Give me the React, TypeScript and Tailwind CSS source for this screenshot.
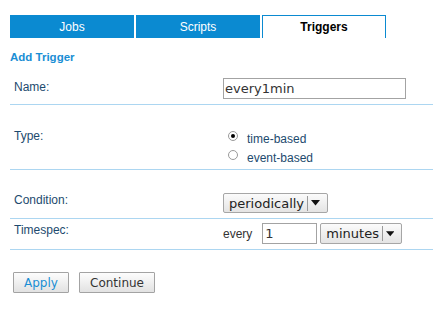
import React from 'react';

const label = "font-['Liberation_Sans',Arial,sans-serif] text-[12px] leading-[14px] text-[#1d4a6e]";
const ctrl = "font-['DejaVu_Sans',Verdana,sans-serif]";

const Select: React.FC<{ value: string; className?: string }> = ({ value, className }) => (
  <div
    className={`${ctrl} flex items-center h-full border border-[#a6a6a6] rounded-[2px] bg-gradient-to-b from-[#fbfbfb] to-[#e4e4e4] text-[13px] text-[#222] pl-[5px] pr-[7px] ${className ?? ''}`}
  >
    <span className="leading-none">{value}</span>
    <span className="ml-[3px] w-px h-[15px] bg-[#9a9a9a]" />
    <svg className="ml-[3px]" width="9" height="6" viewBox="0 0 9 6">
      <path d="M0 0h9L4.5 5.5z" fill="#111" />
    </svg>
  </div>
);

const Radio: React.FC<{ checked?: boolean; text: string }> = ({ checked, text }) => (
  <div className="flex items-start h-[19px]">
    <span className="mt-[1px] w-[10px] h-[10px] rounded-full border border-[#9a9a9a] bg-white flex items-center justify-center">
      {checked && <span className="w-[4px] h-[4px] rounded-full bg-black" />}
    </span>
    <span className={`${label} ml-[9px] leading-[19px]`}>{text}</span>
  </div>
);

export default function App() {
  return (
    <div className="w-[433px] h-[316px] bg-white pl-[10px] pt-[15px] overflow-hidden">
      {/* tabs */}
      <div className="flex gap-[2px] h-[23px] font-['Liberation_Sans',Arial,sans-serif] text-[12px]">
        <div className="w-[124px] bg-[#0b8ad1] text-white flex items-center justify-center">Jobs</div>
        <div className="w-[124px] bg-[#0b8ad1] text-white flex items-center justify-center">Scripts</div>
        <div className="w-[124px] border border-b-0 border-[#0b8ad1] bg-white text-black font-bold flex items-center justify-center">
          Triggers
        </div>
      </div>

      <div className="mt-[12px] font-['Liberation_Sans',Arial,sans-serif] font-bold text-[11.5px] leading-[14px] text-[#1a8ed4]">
        Add Trigger
      </div>

      <div className="mt-[10px]">
        {/* Name */}
        <div className="flex h-[31px] border-b border-[#acd6f1]">
          <div className={`${label} w-[213px] pl-[4px] mt-[6px]`}>Name:</div>
          <input
            readOnly
            value="every1min"
            className={`${ctrl} mt-[4px] w-[183px] h-[21px] border border-[#a3a3a3] bg-white px-[1px] text-[13px] text-[#333] outline-none`}
          />
        </div>

        {/* Type */}
        <div className="flex h-[65px] border-b border-[#acd6f1]">
          <div className={`${label} w-[213px] pl-[4px] mt-[24px]`}>Type:</div>
          <div className="ml-[5px] mt-[25px] flex flex-col">
            <Radio checked text="time-based" />
            <Radio text="event-based" />
          </div>
        </div>

        {/* Condition */}
        <div className="flex h-[49px] border-b border-[#acd6f1]">
          <div className={`${label} w-[213px] pl-[4px] mt-[23px]`}>Condition:</div>
          <div className="mt-[23px] h-[20px]">
            <Select value="periodically" />
          </div>
        </div>

        {/* Timespec */}
        <div className="flex h-[31px] border-b border-[#acd6f1]">
          <div className={`${label} w-[213px] pl-[4px] mt-[4px]`}>Timespec:</div>
          <div className="mt-[4px] h-[21px] flex items-center">
            <span className="font-['Liberation_Sans',Arial,sans-serif] text-[12px] text-[#333]">every</span>
            <input
              readOnly
              value="1"
              className={`${ctrl} ml-[10px] w-[55px] h-[21px] border border-[#a3a3a3] bg-white px-[2px] text-[13px] text-[#333] outline-none`}
            />
            <Select value="minutes" className="ml-[3px] w-[82px]" />
          </div>
        </div>
      </div>

      {/* buttons */}
      <div className={`${ctrl} flex mt-[22px] ml-[3px] gap-[10px] text-[12px]`}>
        <button className="w-[56px] h-[21px] border border-[#a3a3a3] rounded-[1px] bg-gradient-to-b from-[#fdfdfd] to-[#e2e2e2] text-[#1a8ed4]">
          Apply
        </button>
        <button className="w-[76px] h-[21px] border border-[#a3a3a3] rounded-[1px] bg-gradient-to-b from-[#fdfdfd] to-[#e2e2e2] text-[#333]">
          Continue
        </button>
      </div>
    </div>
  );
}
